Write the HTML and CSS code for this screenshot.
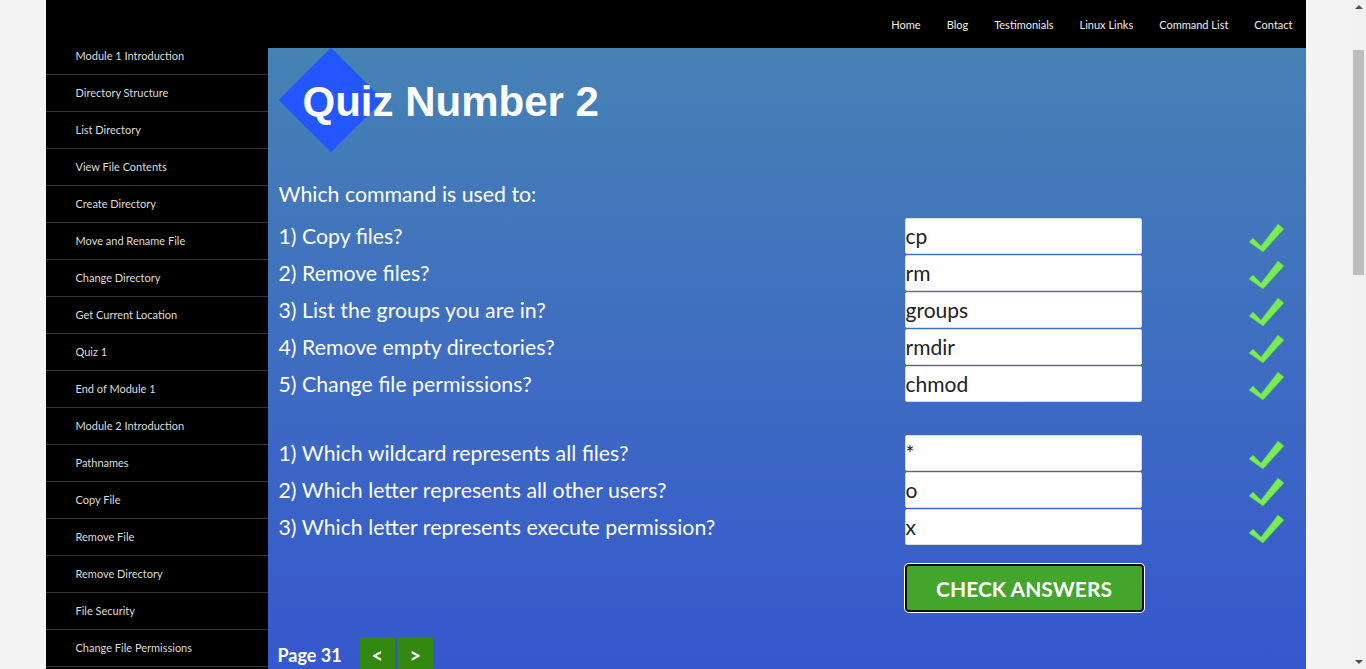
FILE: index.html
```html
<!DOCTYPE html>
<html lang="en">
<head>
    <meta charset="UTF-8">
    <meta name="viewport" content="width=device-width, initial-scale=1.0">
    <title>Quiz Number 2</title>
    <link rel="stylesheet" href="styles.css">
</head>
<body>
    <div class="wrapper">
        <!-- Lesson list -->
        <ul class="sidebar">
            <li><a href="#">Module 1 Introduction</a></li>
            <li><a href="#">Directory Structure</a></li>
            <li><a href="#">List Directory</a></li>
            <li><a href="#">View File Contents</a></li>
            <li><a href="#">Create Directory</a></li>
            <li><a href="#">Move and Rename File</a></li>
            <li><a href="#">Change Directory</a></li>
            <li><a href="#">Get Current Location</a></li>
            <li><a href="#">Quiz 1</a></li>
            <li><a href="#">End of Module 1</a></li>
            <li><a href="#">Module 2 Introduction</a></li>
            <li><a href="#">Pathnames</a></li>
            <li><a href="#">Copy File</a></li>
            <li><a href="#">Remove File</a></li>
            <li><a href="#">Remove Directory</a></li>
            <li><a href="#">File Security</a></li>
            <li><a href="#">Change File Permissions</a></li>
        </ul>

        <div class="content">
            <!-- Top navigation -->
            <nav class="topnav">
                <a href="#">Home</a>
                <a href="#">Blog</a>
                <a href="#">Testimonials</a>
                <a href="#">Linux Links</a>
                <a href="#">Command List</a>
                <a href="#">Contact</a>
            </nav>

            <main class="main">
                <h1 class="quiz-title">Quiz Number 2</h1>

                <p class="intro">Which command is used to:</p>

                <div class="quiz-group">
                    <label class="question">1) Copy files?</label>
                    <input class="answer" type="text" value="cp">
                    <svg class="tick" viewBox="0 0 38 34"><polygon points="2,21 6,17 14,25 31,3 37,8 16,31"/></svg>

                    <label class="question">2) Remove files?</label>
                    <input class="answer" type="text" value="rm">
                    <svg class="tick" viewBox="0 0 38 34"><polygon points="2,21 6,17 14,25 31,3 37,8 16,31"/></svg>

                    <label class="question">3) List the groups you are in?</label>
                    <input class="answer" type="text" value="groups">
                    <svg class="tick" viewBox="0 0 38 34"><polygon points="2,21 6,17 14,25 31,3 37,8 16,31"/></svg>

                    <label class="question">4) Remove empty directories?</label>
                    <input class="answer" type="text" value="rmdir">
                    <svg class="tick" viewBox="0 0 38 34"><polygon points="2,21 6,17 14,25 31,3 37,8 16,31"/></svg>

                    <label class="question">5) Change file permissions?</label>
                    <input class="answer" type="text" value="chmod">
                    <svg class="tick" viewBox="0 0 38 34"><polygon points="2,21 6,17 14,25 31,3 37,8 16,31"/></svg>
                </div>

                <div class="quiz-group second">
                    <label class="question">1) Which wildcard represents all files?</label>
                    <input class="answer" type="text" value="*">
                    <svg class="tick" viewBox="0 0 38 34"><polygon points="2,21 6,17 14,25 31,3 37,8 16,31"/></svg>

                    <label class="question">2) Which letter represents all other users?</label>
                    <input class="answer" type="text" value="o">
                    <svg class="tick" viewBox="0 0 38 34"><polygon points="2,21 6,17 14,25 31,3 37,8 16,31"/></svg>

                    <label class="question">3) Which letter represents execute permission?</label>
                    <input class="answer" type="text" value="x">
                    <svg class="tick" viewBox="0 0 38 34"><polygon points="2,21 6,17 14,25 31,3 37,8 16,31"/></svg>
                </div>

                <div class="check-row">
                    <button class="check-btn" type="button">CHECK ANSWERS</button>
                </div>

                <div class="pager">
                    <span class="page-num">Page 31</span>
                    <a href="#" class="page-btn">&lt;</a>
                    <a href="#" class="page-btn">&gt;</a>
                </div>
            </main>
        </div>
    </div>

    <!-- window scrollbar -->
    <div class="scrollbar">
        <span class="arrow up"></span>
        <span class="thumb"></span>
        <span class="arrow down"></span>
    </div>
</body>
</html>
```

FILE: styles.css
```css
* {
    box-sizing: border-box;
    margin: 0;
    padding: 0;
}
html {
    background-color: #f4f4f4;
}
body {
    font-family: Lato, "Open Sans", sans-serif;
    padding-right: 15px;
    overflow-x: hidden;
}
.wrapper {
    width: 1260px;
    margin: 0 auto;
    background-color: #000;
    display: flex;
}
.sidebar {
    width: 222px;
    flex-shrink: 0;
    list-style: none;
    padding-top: 38px;
    padding-bottom: 80px;
}
.sidebar li {
    height: 37px;
    padding-bottom: 2px;
    border-bottom: 1px solid #333;
    display: flex;
    align-items: center;
}
.sidebar a {
    color: #dcdcdc;
    font-size: 11px;
    text-decoration: none;
    padding-left: 30px;
}
.content {
    flex: 1;
    min-width: 0;
    display: flex;
    flex-direction: column;
}
.topnav {
    height: 48px;
    display: flex;
    justify-content: flex-end;
    align-items: center;
    gap: 26px;
    padding-right: 13px;
}
.topnav a {
    color: #eee;
    font-size: 11px;
    text-decoration: none;
}
.main {
    flex: 1;
    padding-left: 11px;
    color: #fff;
    background: linear-gradient(to bottom, #4682b4, #3452d2);
    overflow: hidden;
}
.quiz-title {
    position: relative;
    z-index: 0;
    margin-top: 30px;
    padding-left: 24px;
    font-family: "Liberation Sans", Arial, sans-serif;
    font-size: 42px;
    line-height: 48px;
    font-weight: bold;
}
.quiz-title::before {
    content: "";
    position: absolute;
    left: 15px;
    top: -15px;
    width: 74px;
    height: 74px;
    background-color: #2356fc;
    transform: rotate(45deg);
    z-index: -1;
}
.intro {
    margin-top: 56px;
    font-size: 21.3px;
    line-height: 24px;
}
.quiz-group {
    margin-top: 12px;
    display: grid;
    grid-template-columns: 626px 237px 1fr;
    grid-auto-rows: 36px;
    row-gap: 1px;
    align-items: center;
}
.quiz-group.second {
    margin-top: 33px;
}
.question {
    font-size: 21.3px;
    white-space: nowrap;
}
.answer {
    width: 237px;
    height: 36px;
    border: 1px solid #ddd;
    border-radius: 2px;
    background-color: #fff;
    font-family: Lato, sans-serif;
    font-size: 21px;
    color: #222;
    padding: 0 0 2px 0;
}
.tick {
    width: 38px;
    height: 34px;
    margin-left: 105px;
    margin-top: 4px;
    fill: #78ec55;
    stroke: #5cc040;
    stroke-width: 0.6;
}
.check-row {
    margin-top: 19px;
    padding-left: 626px;
}
.check-btn {
    width: 239px;
    height: 48px;
    background-color: #43a52b;
    border: 2px solid #111;
    border-radius: 4px;
    box-shadow: 0 0 0 1px #fff;
    color: #fff;
    font-family: Lato, sans-serif;
    font-size: 21px;
    font-weight: bold;
    cursor: pointer;
}
.pager {
    margin-top: 25px;
    display: flex;
    align-items: center;
    gap: 3px;
    padding-bottom: 20px;
}
.page-num {
    font-size: 18px;
    font-weight: bold;
    margin-right: 15px;
    margin-left: -1px;
}
.page-btn {
    width: 35px;
    height: 36px;
    background-color: #338811;
    border-radius: 2px;
    color: #fff;
    font-size: 20px;
    font-weight: bold;
    text-decoration: none;
    display: flex;
    align-items: center;
    justify-content: center;
}
.scrollbar {
    position: fixed;
    top: 0;
    right: 0;
    width: 15px;
    height: 100vh;
    background-color: #f1f1f1;
    display: flex;
    flex-direction: column;
    align-items: center;
}
.arrow {
    width: 0;
    height: 0;
    border-left: 4px solid transparent;
    border-right: 4px solid transparent;
}
.arrow.up {
    margin-top: 5px;
    border-bottom: 4px solid #505050;
}
.arrow.down {
    margin-top: auto;
    margin-bottom: 5px;
    border-top: 4px solid #505050;
}
.thumb {
    width: 11px;
    height: 225px;
    margin-top: 41px;
    background-color: #bdbdbd;
}
```
